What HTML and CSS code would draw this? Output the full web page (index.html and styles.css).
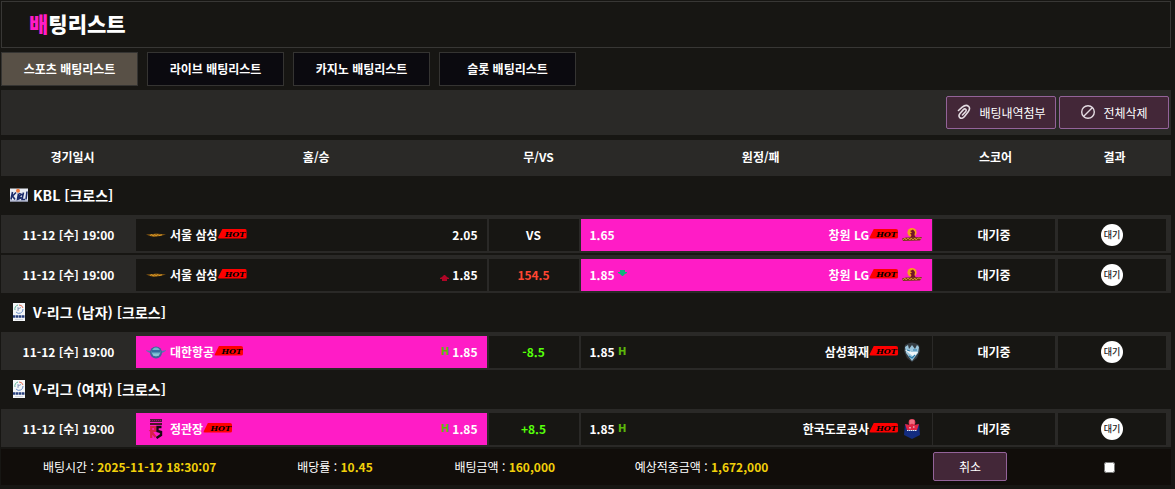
FILE: index.html
```
<!DOCTYPE html>
<html lang="ko">
<head>
  <meta charset="utf-8">
  <title>배팅리스트</title>
  <link rel="stylesheet" href="styles.css">
</head>
<body>
  <!-- Shared logos and icons -->
  <svg class="sprite" aria-hidden="true">
    <symbol id="kbl" viewBox="0 0 18 13">
      <rect width="18" height="13" fill="#e9ecf4"/>
      <circle cx="8" cy="2.2" r="2" fill="#f0783c"/>
      <path d="M2.500 3.500L1 11M6 4L2.500 7.500L5 11M8.500 5L7.500 11L11 9.500L8.500 8L11.500 6L9 5M13.500 4L12 11L15 11M17 3L16 11" fill="none" stroke="#1c2c6c" stroke-width="1.600"/>
      <path d="M0 12.500H18" stroke="#8790b4"/>
    </symbol>
    <symbol id="kovo" viewBox="0 0 12 18">
      <rect width="12" height="18" fill="#f4f6f8"/>
      <path d="M2 7A4 4 0 0 1 5 2" fill="none" stroke="#5fb49a" stroke-width="1"/>
      <path d="M6 2A4 4 0 0 1 10 5" fill="none" stroke="#e0705c" stroke-width="1"/>
      <path d="M10 6A4 4 0 0 1 3 9" fill="none" stroke="#6d92cc" stroke-width="1"/>
      <path d="M5 4V8M5 6L8 4.500" fill="none" stroke="#7286b0" stroke-width=".8"/>
      <path d="M0 13.500H12" stroke="#263e7c" stroke-width="2.400" stroke-dasharray="2.400 .5"/>
      <path d="M2 16.500H10" stroke="#c4c8d4" stroke-width=".7"/>
    </symbol>
    <symbol id="samsung" viewBox="0 0 20 20">
      <path d="M0 9.500L7 9L10 8.500L20 9.500L14 11L8 12L4 11Z" fill="#8c5c12"/>
      <path d="M4 10.500L6 9.500L7 11L9 9.500L10 11L12 9.500L13 10.700L16 9.800" fill="none" stroke="#e6a52c" stroke-width=".8"/>
    </symbol>
    <symbol id="lg" viewBox="0 0 20 20">
      <circle cx="10" cy="7.500" r="4.600" fill="#f6a21c"/>
      <path d="M8 6L11 4.500L13 7L12.500 10L14 13H8L9.500 10L8 8.500L10 7.500Z" fill="#741428"/>
      <path d="M0 13.500L4 12.500L20 12L18 15.500L1 16Z" fill="#7a3a1e"/>
      <path d="M1 15L3 13L4 15L6 13L8 15L9 13L11 15L13 13L14 15L16 13L19 13.500" fill="none" stroke="#d99a22" stroke-width=".9"/>
    </symbol>
    <symbol id="korean-air" viewBox="0 0 20 20">
      <path d="M-1 8L5 9H15L21 8L17 10.500L14 12H6L3 10.500Z" fill="#5479ae"/>
      <circle cx="10" cy="10.500" r="6" fill="#416498"/>
      <circle cx="10" cy="10" r="4.400" fill="#70b6cc"/>
      <path d="M6 8H14V10.500H6Z" fill="#356da0"/>
      <path d="M7 13H13" fill="none" stroke="#a6d4e0"/>
    </symbol>
    <symbol id="red-sparks" viewBox="0 0 20 20">
      <path d="M4 0H16V3H4Z" fill="#4a183a"/>
      <path d="M4 1.500H16" stroke="#a03068" stroke-width=".8" stroke-dasharray="1 1"/>
      <path d="M4 4H16V6H4Z" fill="#4c1428"/>
      <path d="M5.200 19V8H9V12H5L9.500 18" fill="none" stroke="#d82048" stroke-width="2.200"/>
      <path d="M15.500 8H11.500V12L15 13V16L10.500 19" fill="none" stroke="#15090f" stroke-width="2.400"/>
    </symbol>
    <symbol id="bluefangs" viewBox="0 0 20 20">
      <path d="M3 3Q10-2 17 3L18 9L15 16L10 20L5 16L2 9Z" fill="#353c42"/>
      <path d="M3 5L6 3L7 7L10 3L13 7L15 3L17 5L16 11L10 19L4 11Z" fill="#9cc6dc"/>
      <path d="M3 8L7 8L9 10H16L12 15L8 12Z" fill="#eef5f8"/>
      <path d="M5 8L8 9M11 8H15M7 14L10 16L13 13" fill="none" stroke="#287ba9" stroke-width="1.200"/>
    </symbol>
    <symbol id="hipass" viewBox="0 0 20 20">
      <path d="M3 5L10 7L17 5L18 16L10 20L2 16Z" fill="#132c80"/>
      <circle cx="10" cy="3.400" r="3.300" fill="#ee4a64"/>
      <path d="M3 5L8 6L10 4L12 6L17 5L15 11H5Z" fill="#e22443"/>
      <path d="M8 2H12M8 4H12" stroke="#fab0b8" stroke-width=".7"/>
      <path d="M5 11.500H15M8 8V10M11 8H13" stroke="#e8edf8" stroke-width="1.200" stroke-dasharray="1.500 .5"/>
    </symbol>
  </svg>

  <header class="page-title">
    <h1><span class="accent">배</span>팅리스트</h1>
  </header>

  <nav class="tabs">
    <a href="#sports" class="tab active">스포츠 배팅리스트</a>
    <a href="#live" class="tab">라이브 배팅리스트</a>
    <a href="#casino" class="tab">카지노 배팅리스트</a>
    <a href="#slot" class="tab">슬롯 배팅리스트</a>
  </nav>

  <div class="toolbar">
    <button type="button" class="btn">
      <svg class="btn-icon clip" viewBox="0 0 16 16"><path d="M2.500 6.500L6.200 3.200C8.800 1 11 1 12.500 2.300C14 3.800 13.700 5.800 12.200 7.800L8.500 12.600C7 14.500 5 14.800 3.800 13.600C2.600 12.400 2.900 10.800 4 9.400L7.400 5.600C8.200 4.800 9.200 4.700 9.800 5.300C10.400 5.900 10.200 6.800 9.500 7.700L6.500 11"/></svg>
      배팅내역첨부
    </button>
    <button type="button" class="btn">
      <svg class="btn-icon" viewBox="0 0 16 16"><circle cx="8" cy="8" r="6.300"/><path d="M4 12L12 4"/></svg>
      전체삭제
    </button>
  </div>

  <table class="bets">
    <colgroup>
      <col class="col-time">
      <col>
      <col class="col-vs">
      <col>
      <col class="col-score">
      <col class="col-result">
    </colgroup>
    <thead>
      <tr>
        <th>경기일시</th>
        <th>홈/승</th>
        <th>무/VS</th>
        <th>원정/패</th>
        <th>스코어</th>
        <th>결과</th>
      </tr>
    </thead>
    <tbody>
      <tr class="league">
        <td colspan="6"><div class="league-name"><svg class="league-logo"><use href="#kbl"/></svg>KBL [크로스]</div></td>
      </tr>
      <tr class="match">
        <td class="time">11-12 [수] 19:00</td>
        <td class="home">
          <div class="team">
            <svg class="logo"><use href="#samsung"/></svg>
            <span class="name">서울 삼성</span><span class="hot">HOT</span>
            <span class="odds push">2.05</span>
          </div>
        </td>
        <td class="vs">VS</td>
        <td class="away picked">
          <div class="team">
            <span class="odds">1.65</span>
            <span class="name push">창원 LG</span><span class="hot">HOT</span>
            <svg class="logo"><use href="#lg"/></svg>
          </div>
        </td>
        <td class="score">대기중</td>
        <td class="result"><span class="badge">대기</span></td>
      </tr>
      <tr class="match">
        <td class="time">11-12 [수] 19:00</td>
        <td class="home">
          <div class="team">
            <svg class="logo"><use href="#samsung"/></svg>
            <span class="name">서울 삼성</span><span class="hot">HOT</span>
            <svg class="arrow push" viewBox="0 0 9 12"><path d="M4 6H5L7 8L9 9V10H7V12H2V10H0V9L2 8Z" fill="#b00526"/></svg>
            <span class="odds">1.85</span>
          </div>
        </td>
        <td class="vs over">154.5</td>
        <td class="away picked">
          <div class="team">
            <span class="odds">1.85</span>
            <svg class="arrow" viewBox="0 0 9 12"><path d="M2 1H7V3H9V4L7 5L5 7H4L2 5L0 4V3H2Z" fill="#0fb37c"/></svg>
            <span class="name push">창원 LG</span><span class="hot">HOT</span>
            <svg class="logo"><use href="#lg"/></svg>
          </div>
        </td>
        <td class="score">대기중</td>
        <td class="result"><span class="badge">대기</span></td>
      </tr>

      <tr class="league">
        <td colspan="6"><div class="league-name"><svg class="league-logo"><use href="#kovo"/></svg>V-리그 (남자) [크로스]</div></td>
      </tr>
      <tr class="match">
        <td class="time">11-12 [수] 19:00</td>
        <td class="home picked">
          <div class="team">
            <svg class="logo"><use href="#korean-air"/></svg>
            <span class="name">대한항공</span><span class="hot">HOT</span>
            <span class="handicap push">H</span>
            <span class="odds">1.85</span>
          </div>
        </td>
        <td class="vs line">-8.5</td>
        <td class="away">
          <div class="team">
            <span class="odds">1.85</span>
            <span class="handicap">H</span>
            <span class="name push">삼성화재</span><span class="hot">HOT</span>
            <svg class="logo"><use href="#bluefangs"/></svg>
          </div>
        </td>
        <td class="score">대기중</td>
        <td class="result"><span class="badge">대기</span></td>
      </tr>

      <tr class="league">
        <td colspan="6"><div class="league-name"><svg class="league-logo"><use href="#kovo"/></svg>V-리그 (여자) [크로스]</div></td>
      </tr>
      <tr class="match">
        <td class="time">11-12 [수] 19:00</td>
        <td class="home picked">
          <div class="team">
            <svg class="logo"><use href="#red-sparks"/></svg>
            <span class="name">정관장</span><span class="hot">HOT</span>
            <span class="handicap push">H</span>
            <span class="odds">1.85</span>
          </div>
        </td>
        <td class="vs line">+8.5</td>
        <td class="away">
          <div class="team">
            <span class="odds">1.85</span>
            <span class="handicap">H</span>
            <span class="name push">한국도로공사</span><span class="hot">HOT</span>
            <svg class="logo"><use href="#hipass"/></svg>
          </div>
        </td>
        <td class="score">대기중</td>
        <td class="result"><span class="badge">대기</span></td>
      </tr>
    </tbody>
  </table>

  <div class="summary">
    <span>배팅시간 : <b>2025-11-12 18:30:07</b></span>
    <span>배당률 : <b>10.45</b></span>
    <span>배팅금액 : <b>160,000</b></span>
    <span>예상적중금액 : <b>1,672,000</b></span>
    <button type="button" class="btn cancel">취소</button>
    <input type="checkbox" class="check" aria-label="배팅 선택">
  </div>
</body>
</html>
```
FILE: styles.css
```
* {
  box-sizing: border-box;
}
body {
  margin: 0;
  padding: 1px 4px 4px 1px;
  background: #171613;
  color: #fff;
  font-family: "Noto Sans CJK KR", sans-serif;
  font-size: 12px;
  line-height: 18px;
}
.sprite {
  display: none;
}

.page-title {
  padding: 6px 27px 9px;
  border: 1px solid #383735;
}
.page-title h1 {
  margin: 0;
  font-size: 21px;
  line-height: 30px;
  font-weight: 900;
}
.accent {
  color: #ff1cc6;
}

/* Tabs */
.tabs {
  display: flex;
  gap: 9px;
  margin: 4px 0;
}
.tab {
  width: 137px;
  height: 34px;
  border: 1px solid #353432;
  background: #0b0a0f;
  color: #fff;
  font-weight: bold;
  line-height: 32px;
  text-align: center;
  text-decoration: none;
}
.tab.active {
  background: #585046;
}

/* Buttons */
.toolbar {
  display: flex;
  justify-content: flex-end;
  gap: 3px;
  padding: 6px 2px;
  background: #2a2927;
}
.btn {
  display: flex;
  align-items: center;
  justify-content: center;
  gap: 7px;
  width: 110px;
  height: 33px;
  padding: 0 0 1px;
  border: 1px solid #936399;
  border-radius: 2px;
  background: #432738;
  color: #fff;
  font-family: inherit;
  font-size: 12px;
  cursor: pointer;
}
.btn:hover {
  background: #573349;
}
.btn-icon {
  width: 16px;
  height: 16px;
  fill: none;
  stroke: #e4dce2;
  stroke-width: 1.4;
  stroke-linecap: round;
}
.clip {
  stroke-width: 1.6;
}

/* Bet table */
.bets {
  width: 100%;
  margin-top: 3px;
  table-layout: fixed;
  border-collapse: separate;
  border-spacing: 0 2px;
}
.col-time {
  width: 135px;
}
.col-vs {
  width: 92px;
}
.col-score {
  width: 125px;
}
.col-result {
  width: 113px;
}
.bets th {
  height: 36px;
  padding: 0 0 2px 8px;
  background: #2a2927;
}
.bets th:nth-child(n+5) {
  padding-left: 0;
}
.bets td {
  padding: 0;
}
.bets .league td {
  height: 35px;
  padding-bottom: 2px;
}
.league-name {
  display: flex;
  align-items: center;
  gap: 5px;
  padding-left: 9px;
  font-size: 14px;
  font-weight: bold;
}
.league-logo {
  width: 18px;
  height: 18px;
}
.match td {
  height: 38px;
  border: 0 solid #2a2927;
  border-width: 4px 2px 2px 0;
  font-weight: bold;
  text-align: center;
}
.bets .time,
.bets .vs,
.bets .score {
  padding-bottom: 1px;
}
.match .time {
  border-right: 0;
  background: #2a2927;
}
.match .away {
  border-right-width: 1px;
}
.match .score {
  border-right-width: 3px;
}
.match .result {
  border-right-width: 5px;
}
.match .picked {
  background: #ff1cc6;
}
.team {
  display: flex;
  align-items: center;
  padding: 0 9px;
}
.logo {
  width: 20px;
  height: 20px;
  overflow: visible;
}
.home .logo {
  margin: 0 4px 0 1px;
}
.away .logo {
  margin: 0 1px 0 4px;
}
.push {
  margin-left: auto;
}
.hot {
  width: 29px;
  height: 10px;
  margin: 0 0 3px;
  padding-left: 6px;
  border-radius: 2px;
  background: #f00;
  clip-path: polygon(0 100%, 5px 0, 100% 0, 100% 100%);
  color: #000;
  font: italic bold 8px/10px "DejaVu Serif", serif;
}
.arrow,
.handicap {
  width: 9px;
  height: 12px;
  color: #5bb80a;
  font: bold 10px/12px "DejaVu Sans", sans-serif;
}
.home .odds {
  padding-left: 3px;
}
.away .odds {
  padding-right: 3px;
}
.over {
  color: #ff4632;
}
.line {
  color: #56ff0a;
}
.badge {
  display: block;
  width: 22px;
  height: 22px;
  margin: 0 auto;
  border-radius: 50%;
  background: #fff;
  color: #222;
  font-size: 9px;
  font-weight: 500;
  line-height: 22px;
}

/* Totals under the table */
.summary {
  display: grid;
  grid-template-columns: 254fr 157fr 180fr 298fr 125px 113px;
  align-items: center;
  height: 36px;
  padding: 0 0 1px 42px;
  background: #110d0a;
}
.summary b {
  color: #f1d00a;
}
.cancel {
  width: 74px;
  height: 29px;
}
.check {
  width: 11px;
  height: 11px;
  margin: 2px 0 0 46px;
}
```
